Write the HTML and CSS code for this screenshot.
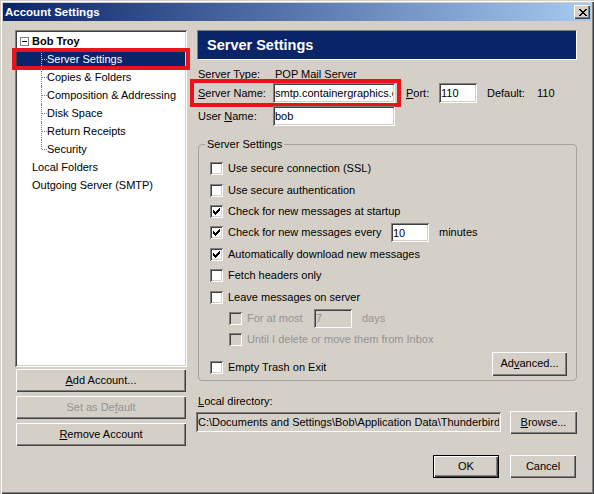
FILE: index.html
```html
<!DOCTYPE html>
<html>
<head>
<meta charset="utf-8">
<title>Account Settings</title>
<link rel="stylesheet" href="styles.css">
</head>
<body>
<div class="window">
  <div class="titlebar">
    <span class="title">Account Settings</span>
    <span class="close"><svg width="8" height="7" viewBox="0 0 8 7" shape-rendering="crispEdges"><path d="M0 0h2v1h-2z M6 0h2v1h-2z M1 1h2v1h-2z M5 1h2v1h-2z M2 2h4v1h-4z M3 3h2v1h-2z M2 4h4v1h-4z M1 5h2v1h-2z M5 5h2v1h-2z M0 6h2v1h-2z M6 6h2v1h-2z" fill="#000"/></svg></span>
  </div>
  <div class="content">
    <div class="left">
      <div class="tree">
        <div class="node root"><span class="expander"><svg width="9" height="9" viewBox="0 0 9 9" shape-rendering="crispEdges"><rect x="0.5" y="0.5" width="8" height="8" fill="#fff" stroke="#808080"/><path d="M2 4h5v1h-5z" fill="#000"/></svg></span><span class="bold">Bob Troy</span></div>
        <div class="node child selected"><span class="mark"></span>Server Settings</div>
        <div class="node child">Copies &amp; Folders</div>
        <div class="node child">Composition &amp; Addressing</div>
        <div class="node child">Disk Space</div>
        <div class="node child">Return Receipts</div>
        <div class="node child last">Security</div>
        <div class="node top">Local Folders</div>
        <div class="node top">Outgoing Server (SMTP)</div>
      </div>
      <div class="btn-col">
        <button class="btn wide"><u>A</u>dd Account...</button>
        <button class="btn wide disabled">Set as De<u>f</u>ault</button>
        <button class="btn wide"><u>R</u>emove Account</button>
      </div>
    </div>
    <div class="right">
      <div class="panel-header">Server Settings</div>
      <div class="frow info"><span class="lbl">Server Type:</span><span class="val">POP Mail Server</span></div>
      <div class="frow server">
        <span class="hl"><span class="lbl"><u>S</u>erver Name:</span><input class="field w-name" value="smtp.containergraphics.com"></span>
        <span class="port-lbl"><u>P</u>ort:</span><input class="field w-port" value="110">
        <span class="def-lbl">Default:</span><span>110</span>
      </div>
      <div class="frow user"><span class="lbl">User <u>N</u>ame:</span><input class="field w-name" value="bob"></div>
      <fieldset class="group">
        <legend>Server Settings</legend>
        <div class="crow"><span class="cb"></span><span>Use secure connection (SSL)</span></div>
        <div class="crow"><span class="cb"></span><span>Use secure authentication</span></div>
        <div class="crow"><span class="cb"><svg width="13" height="13" viewBox="0 0 13 13" shape-rendering="crispEdges"><path d="M9 3h1v1h-1z M8 4h2v1h-2z M3 5h1v1h-1z M7 5h3v1h-3z M3 6h2v1h-2z M6 6h3v1h-3z M3 7h5v1h-5z M4 8h3v1h-3z M5 9h1v1h-1z" fill="#000"/></svg></span><span>Check for new messages at startup</span></div>
        <div class="crow"><span class="cb"><svg width="13" height="13" viewBox="0 0 13 13" shape-rendering="crispEdges"><path d="M9 3h1v1h-1z M8 4h2v1h-2z M3 5h1v1h-1z M7 5h3v1h-3z M3 6h2v1h-2z M6 6h3v1h-3z M3 7h5v1h-5z M4 8h3v1h-3z M5 9h1v1h-1z" fill="#000"/></svg></span><span class="every-lbl">Check for new messages every</span><input class="field w-small" value="10"><span class="unit">minutes</span></div>
        <div class="crow"><span class="cb"><svg width="13" height="13" viewBox="0 0 13 13" shape-rendering="crispEdges"><path d="M9 3h1v1h-1z M8 4h2v1h-2z M3 5h1v1h-1z M7 5h3v1h-3z M3 6h2v1h-2z M6 6h3v1h-3z M3 7h5v1h-5z M4 8h3v1h-3z M5 9h1v1h-1z" fill="#000"/></svg></span><span>Automatically download new messages</span></div>
        <div class="crow"><span class="cb"></span><span>Fetch headers only</span></div>
        <div class="crow"><span class="cb"></span><span>Leave messages on server</span></div>
        <div class="crow ind dis"><span class="cb off"></span><span class="most-lbl">For at most</span><input class="field w-small off" value="7"><span class="unit">days</span></div>
        <div class="crow ind dis"><span class="cb off"></span><span>Until I delete or move them from Inbox</span></div>
        <div class="crow final"><span class="cb"></span><span>Empty Trash on Exit</span><button class="btn adv">Ad<u>v</u>anced...</button></div>
      </fieldset>
      <div class="ld-label"><u>L</u>ocal directory:</div>
      <div class="ld-row">
        <input class="field dir" value="C:\Documents and Settings\Bob\Application Data\Thunderbird\Profiles\default\Mail\smtp.containergraphics.com">
        <button class="btn browse"><u>B</u>rowse...</button>
      </div>
      <div class="ok-row">
        <button class="btn dlg default">OK</button>
        <button class="btn dlg">Cancel</button>
      </div>
    </div>
  </div>
</div>
</body>
</html>
```
FILE: styles.css
```css
* { box-sizing: border-box; }
html, body { margin: 0; padding: 0; }
body {
  width: 594px;
  height: 494px;
  overflow: hidden;
  background: #d4d0c8;
  font-family: "Liberation Sans", Arial, sans-serif;
  font-size: 11px;
  line-height: 13px;
  color: #000;
}
u { text-decoration: underline; text-underline-offset: 1px; }

.window {
  width: 594px;
  height: 494px;
  padding: 3px;
  background: #d4d0c8;
  box-shadow: inset 1px 1px 0 #d4d0c8, inset 2px 2px 0 #fff, inset -1px -1px 0 #404040, inset -2px -2px 0 #808080;
}

.titlebar {
  height: 18px;
  display: flex;
  align-items: center;
  padding-left: 2px;
  background: linear-gradient(to right, #0a246a, #a6caf0);
}
.title {
  color: #fff;
  font-weight: bold;
  font-size: 11.5px;
}
.close {
  margin-left: auto;
  margin-right: 1px;
  width: 16px;
  height: 14px;
  display: flex;
  align-items: center;
  justify-content: center;
  padding-left: 1px;
  background: #d4d0c8;
  box-shadow: inset 1px 1px 0 #fff, inset -1px -1px 0 #404040, inset -2px -2px 0 #808080;
}
.close svg { display: block; }

.content {
  display: flex;
  gap: 10px;
  padding: 9px 0 0 12px;
}

/* left column */
.left {
  width: 172px;
  display: flex;
  flex-direction: column;
}
.tree {
  height: 337px;
  padding: 2px;
  background: #fff;
  box-shadow: inset 1px 1px 0 #808080, inset -1px -1px 0 #fff, inset 2px 2px 0 #404040, inset -2px -2px 0 #d4d0c8;
}
.node {
  height: 18px;
  line-height: 18px;
  display: flex;
  align-items: center;
  white-space: nowrap;
  position: relative;
}
.root .expander {
  width: 9px;
  height: 9px;
  margin-left: 3px;
  margin-right: 3px;
}
.expander svg { display: block; }
.bold { font-weight: bold; }
.node.top { padding-left: 15px; }
.node.child { padding-left: 30px; }
.node.child::before {
  content: "";
  position: absolute;
  left: 24px;
  top: 0;
  bottom: 0;
  border-left: 1px dotted #808080;
}
.node.child.last::before { bottom: 9px; }
.node.child::after {
  content: "";
  position: absolute;
  left: 25px;
  top: 9px;
  width: 5px;
  border-top: 1px dotted #808080;
}
.node.selected {
  background: #0a246a;
  color: #fff;
}
.node.selected::before, .node.selected::after { border-color: #c8c8d8; }
.mark {
  position: absolute;
  left: -5px;
  right: -5px;
  top: -2px;
  bottom: -2px;
  border: 4px solid #e8141c;
}

.btn-col {
  margin-top: 2px;
  display: flex;
  flex-direction: column;
  gap: 4px;
}

.btn {
  font-family: inherit;
  font-size: 11px;
  line-height: 13px;
  color: #000;
  background: #d4d0c8;
  border: none;
  padding: 0;
  margin: 0;
  box-shadow: inset 1px 1px 0 #fff, inset -1px -1px 0 #404040, inset -2px -2px 0 #808080;
  display: flex;
  align-items: center;
  justify-content: center;
}
.btn.wide { height: 23px; margin: 0 1px; }
.btn.disabled { color: #939393; }

/* right column */
.right {
  width: 380px;
  display: flex;
  flex-direction: column;
}
.panel-header {
  height: 30px;
  background: #0a246a;
  color: #fff;
  font-weight: bold;
  font-size: 14.5px;
  display: flex;
  align-items: center;
  padding-left: 9px;
  border-top: 1px solid #808080;
  border-left: 1px solid #808080;
  border-right: 1px solid #fff;
  border-bottom: 1px solid #fff;
}
.frow {
  display: flex;
  align-items: center;
  white-space: nowrap;
}
.frow.info { height: 18px; margin-top: 5px; }
.frow.server { height: 20px; }
.frow.user { height: 20px; margin-top: 3px; }
.lbl {
  width: 76px;
  padding-left: 1px;
  flex: none;
}
.val { padding-left: 2px; }
.hl {
  display: flex;
  align-items: center;
  height: 20px;
  margin-left: -3px;
  padding-left: 3px;
  margin-right: -2px;
  padding-right: 2px;
  outline: 4px solid #e8141c;
}
.port-lbl { margin-left: 11px; width: 33px; }
.def-lbl { margin-left: 10px; width: 50px; }

.field {
  font-family: inherit;
  font-size: 11px;
  color: #000;
  background: #fff;
  border: none;
  outline: none;
  margin: 0;
  padding: 0 2px;
  height: 20px;
  box-shadow: inset 1px 1px 0 #808080, inset -1px -1px 0 #fff, inset 2px 2px 0 #404040, inset -2px -2px 0 #d4d0c8;
}
.w-name { width: 122px; }
.w-port { width: 38px; }
.w-small { width: 38px; height: 19px; }
.field.off { background: #d4d0c8; color: #939393; }

.group {
  margin: 12px 0 0 1px;
  padding: 7px 9px 1px 11px;
  border: 1px solid #a4a39c;
  border-radius: 4px;
  min-width: 0;
}
.group legend {
  padding: 0 2px;
  margin-left: -5px;
  line-height: 13px;
}
.crow {
  height: 21.4px;
  display: flex;
  align-items: center;
  white-space: nowrap;
}
.crow.ind { padding-left: 19px; }
.crow.dis { color: #939393; }
.crow.final { height: 22px; margin-top: 6px; }
.cb {
  width: 13px;
  height: 13px;
  flex: none;
  margin-right: 5px;
  background: #fff;
  box-shadow: inset 1px 1px 0 #808080, inset -1px -1px 0 #fff, inset 2px 2px 0 #404040, inset -2px -2px 0 #d4d0c8;
}
.cb svg { display: block; }
.cb.off { background: #d4d0c8; }
.every-lbl { width: 163px; }
.most-lbl { width: 67px; }
.unit { margin-left: 10px; }
.btn.adv {
  margin-left: auto;
  align-self: flex-start;
  margin-top: -5px;
  width: 75px;
  height: 24px;
}

.ld-label {
  margin-top: 14px;
  padding-left: 1px;
}
.ld-row {
  margin-top: 3px;
  margin-left: -1px;
  height: 23px;
  display: flex;
  align-items: center;
  gap: 9px;
}
.field.dir {
  flex: 1;
  min-width: 0;
  background: #d4d0c8;
}
.btn.browse { width: 67px; height: 23px; }
.ok-row {
  margin-top: 21px;
  display: flex;
  justify-content: flex-end;
  gap: 11px;
  padding-right: 1px;
}
.btn.dlg { width: 66px; height: 23px; }
.btn.default {
  box-shadow: inset 0 0 0 1px #000, inset 2px 2px 0 #fff, inset -2px -2px 0 #404040, inset -3px -3px 0 #808080;
}
```
